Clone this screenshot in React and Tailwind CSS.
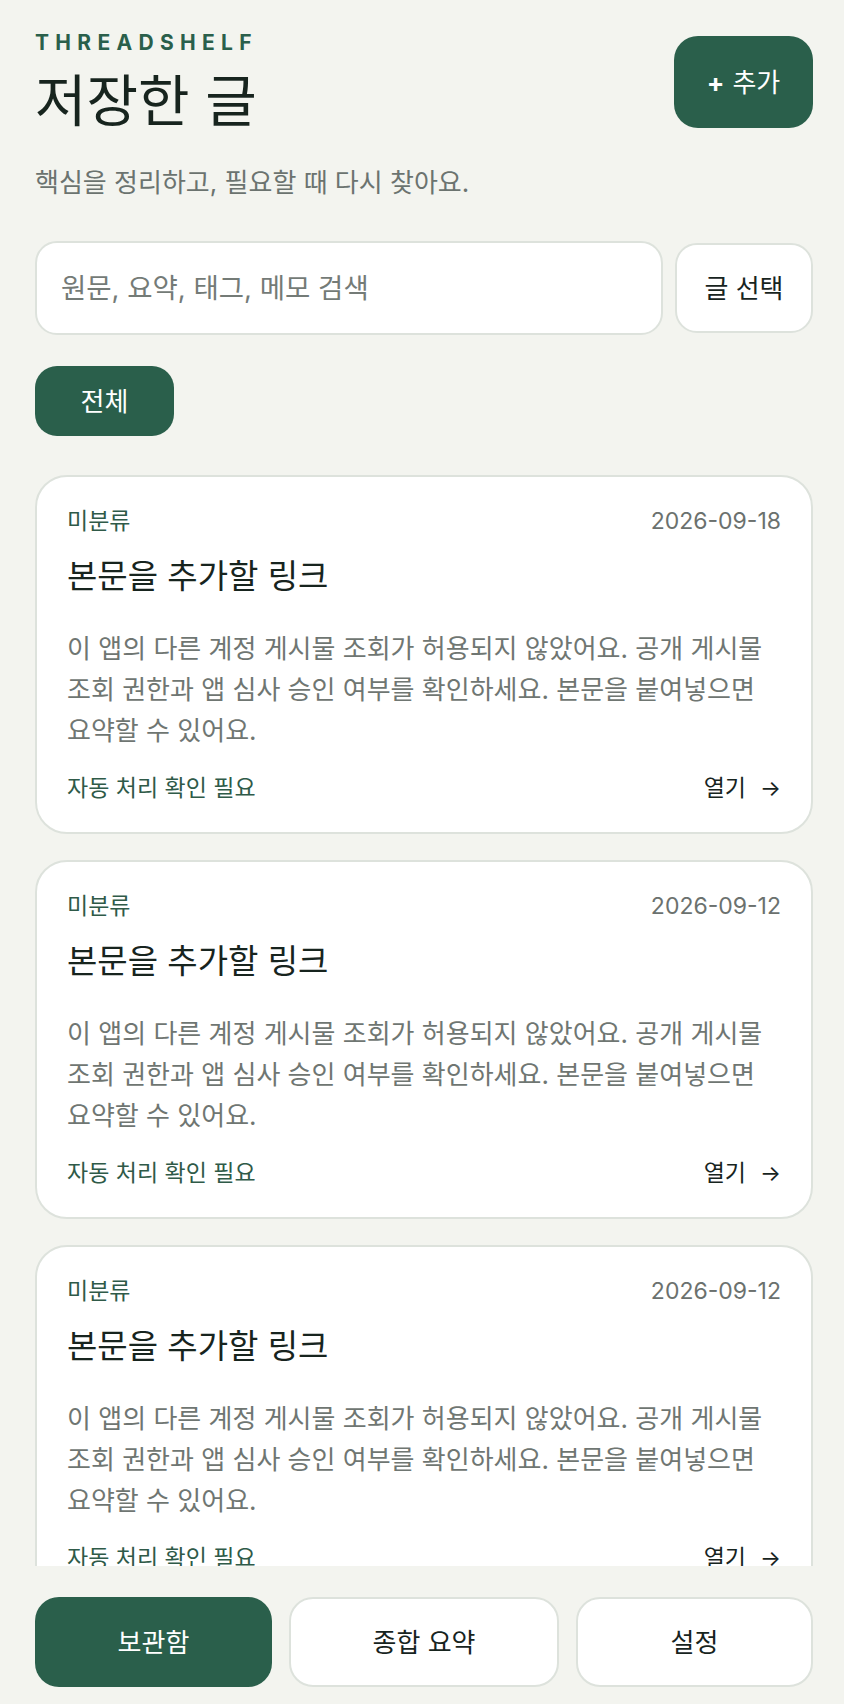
import { useState } from 'react'

const posts = [
  { id: 1, category: '미분류', date: '2026-09-18' },
  { id: 2, category: '미분류', date: '2026-09-12' },
  { id: 3, category: '미분류', date: '2026-09-12' },
]

const bodyText =
  '이 앱의 다른 계정 게시물 조회가 허용되지 않았어요. 공개 게시물 조회 권한과 앱 심사 승인 여부를 확인하세요. 본문을 붙여넣으면 요약할 수 있어요.'

function PostCard({ post }) {
  return (
    <article className="shrink-0 rounded-[32px] border-2 border-[#dde2dc] bg-white px-[30px] pt-[29px] pb-[29px]">
      <div className="flex items-center justify-between text-[23px] leading-[30px]">
        <span className="text-[#2f5a48]">{post.category}</span>
        <span className="text-[#6b716e]">{post.date}</span>
      </div>
      <h2 className="mt-[20px] text-[33px] leading-[40px] text-[#17241e]">본문을 추가할 링크</h2>
      <p className="mt-[32px] text-[26px] leading-[41px] text-[#6f7672]">{bodyText}</p>
      <div className="mt-[22px] flex items-center justify-between text-[23px] leading-[30px]">
        <span className="text-[#2f5a48]">자동 처리 확인 필요</span>
        <span className="flex items-center gap-[14px] text-[#17241e]">
          열기
          <span className="font-['Inter'] text-[22px]">→</span>
        </span>
      </div>
    </article>
  )
}

export default function App() {
  const [tab, setTab] = useState('보관함')
  const tabs = ['보관함', '종합 요약', '설정']

  return (
    <div className="flex h-[1704px] flex-col overflow-hidden bg-[#f3f4ef] pl-[35px] pr-[31px] font-[Inter,'Noto_Sans_CJK_KR',sans-serif]">
      {/* Header */}
      <header className="flex items-start justify-between pt-[29px]">
        <div>
          <p className="text-[21px] font-bold leading-[28px] tracking-[0.3em] text-[#2a5f4b]">THREADSHELF</p>
          <h1 className="mt-[14px] text-[56px] leading-[60px] text-[#17241e]">저장한 글</h1>
        </div>
        <button className="mt-[7px] flex h-[92px] w-[139px] items-center justify-center gap-[8px] rounded-[24px] bg-[#2a5f4b] text-[26px] text-white">
          <span className="font-bold">+</span>
          <span>추가</span>
        </button>
      </header>

      <p className="mt-[34px] text-[26px] leading-[36px] text-[#6b736f]">핵심을 정리하고, 필요할 때 다시 찾아요.</p>

      {/* Search */}
      <div className="mt-[40px] flex items-center gap-[12px]">
        <input
          className="h-[94px] min-w-0 flex-1 rounded-[22px] border-2 border-[#dde2dc] bg-white px-[24px] text-[27.5px] text-[#17241e] outline-none placeholder:text-[#747b77]"
          placeholder="원문, 요약, 태그, 메모 검색"
        />
        <button className="h-[90px] w-[138px] rounded-[22px] border-2 border-[#dde2dc] bg-white text-[26px] text-[#17241e]">
          글 선택
        </button>
      </div>

      <div className="mt-[31px] flex">
        <button className="h-[70px] w-[139px] rounded-[22px] bg-[#2a5f4b] text-[26px] text-white">전체</button>
      </div>

      {/* List */}
      <div className="mt-[39px] flex min-h-0 flex-1 flex-col gap-[26px] overflow-hidden">
        {posts.map((p) => (
          <PostCard key={p.id} post={p} />
        ))}
      </div>

      {/* Bottom nav */}
      <nav className="mt-[31px] mb-[17px] grid h-[90px] shrink-0 grid-cols-[1fr_1.14fr_1fr] gap-[17px]">
        {tabs.map((t) =>
          t === tab ? (
            <button key={t} onClick={() => setTab(t)} className="rounded-[24px] bg-[#2a5f4b] text-[26px] text-white">
              {t}
            </button>
          ) : (
            <button
              key={t}
              onClick={() => setTab(t)}
              className="rounded-[24px] border-2 border-[#dde2dc] bg-white text-[26px] text-[#17241e]"
            >
              {t}
            </button>
          )
        )}
      </nav>
    </div>
  )
}
